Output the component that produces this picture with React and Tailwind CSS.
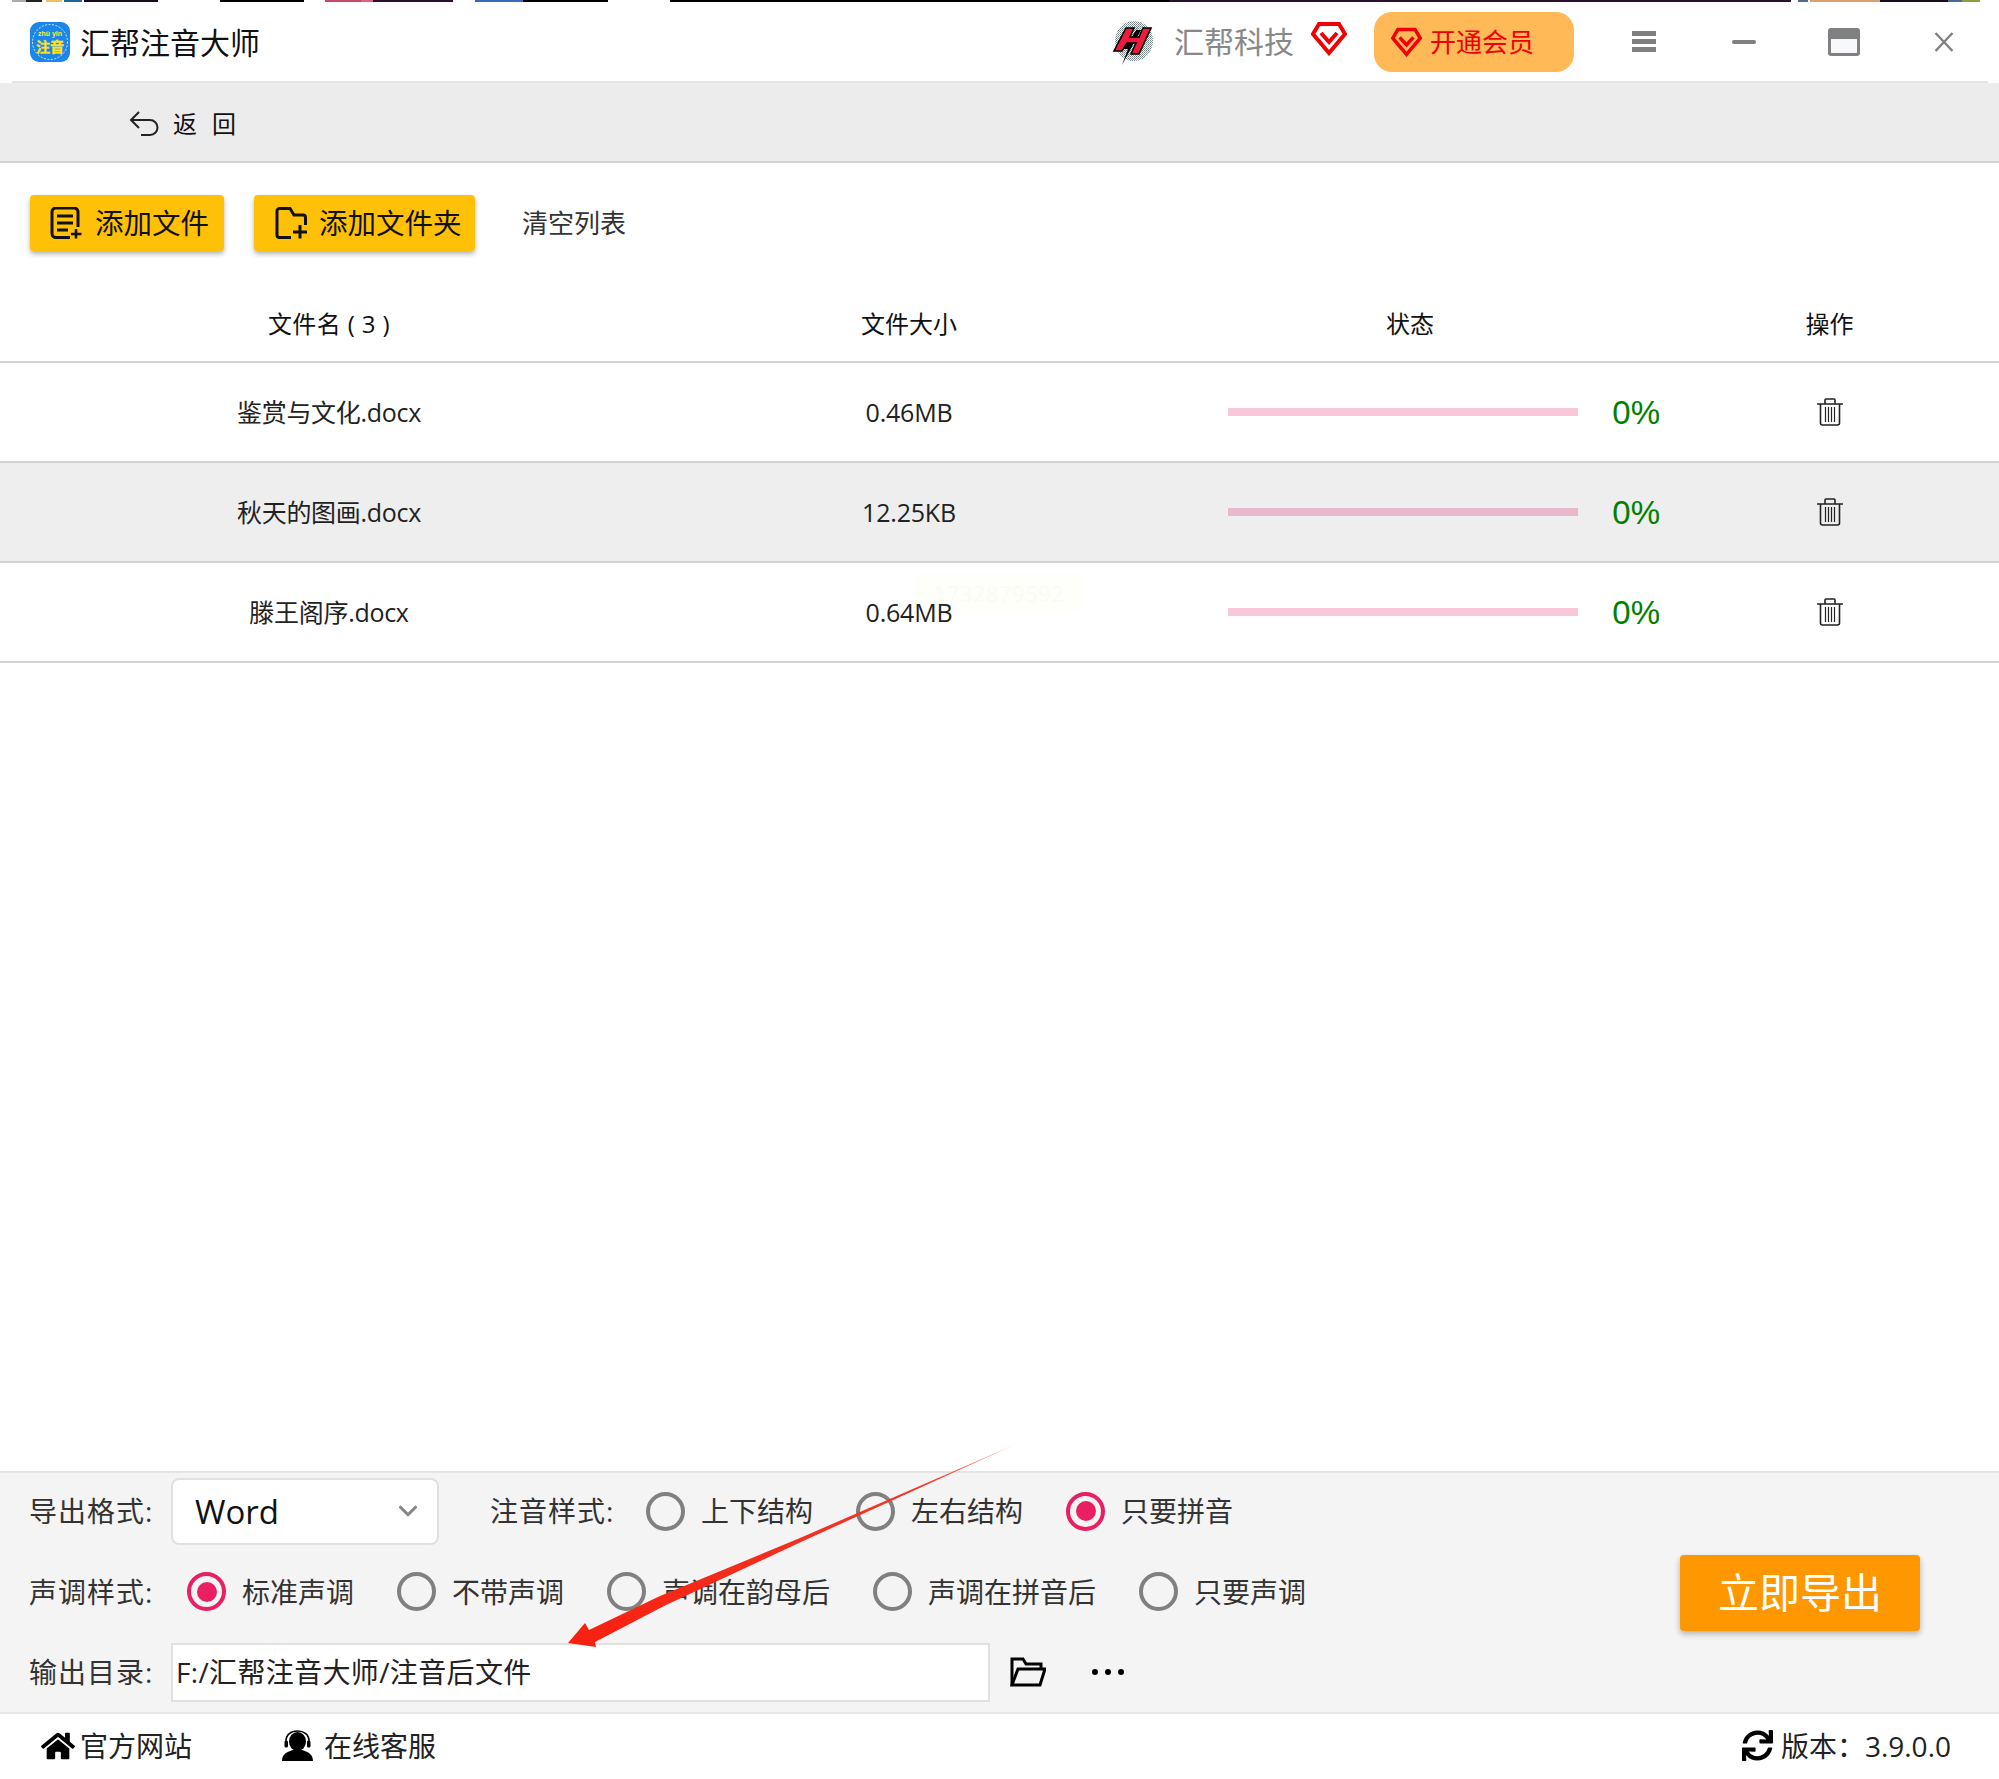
import { FaHome, FaSync } from 'react-icons/fa';
import { ChevronDown } from 'lucide-react';

const STRIP = [
  'w-[12px]', 'w-[14px] bg-[#aaaaaa]', 'w-[16px] bg-[#222222]', 'w-[4px]', 'w-[16px] bg-[#f0c060]', 'w-[2px]',
  'w-[18px] bg-[#1a6aa0]', 'w-[2px]', 'w-[74px] bg-[#1a0a20]', 'w-[62px]', 'w-[84px] bg-black', 'w-[21px]',
  'w-[36px] bg-[#c8486a]', 'w-[12px] bg-[#e06080]', 'w-[80px] bg-[#2a1030]', 'w-[22px]', 'w-[48px] bg-[#3a6ac0]',
  'w-[85px] bg-black', 'w-[62px]', 'w-[500px] bg-black', 'w-[621px] bg-[#2a1030]', 'w-[7px]', 'w-[10px] bg-[#4a6a90]',
  'w-[2px]', 'w-[70px] bg-[#d8a070]', 'w-[68px] bg-[#1a0a20]', 'w-[14px] bg-[#4a6a90]', 'w-[18px] bg-[#8aa040]',
];

const FILES = [
  { name: '鉴赏与文化.docx', size: '0.46MB' },
  { name: '秋天的图画.docx', size: '12.25KB', active: true },
  { name: '滕王阁序.docx', size: '0.64MB', mark: true },
];

const PINYIN_STYLES = [
  { label: '上下结构' },
  { label: '左右结构' },
  { label: '只要拼音', checked: true },
];

const TONE_STYLES = [
  { label: '标准声调', checked: true },
  { label: '不带声调' },
  { label: '声调在韵母后' },
  { label: '声调在拼音后' },
  { label: '只要声调' },
];

function AppLogo() {
  return (
    <svg width="40" height="40" viewBox="0 0 40 40" className="shrink-0">
      <rect width="40" height="40" rx="9" fill="#1c86e8" />
      <circle cx="20" cy="20" r="17.5" fill="none" stroke="#ffffff" strokeWidth="0.8" strokeDasharray="2 1.5" />
      <text x="20" y="14" textAnchor="middle" fontSize="7" fontWeight="700" fill="#ffe94d" fontFamily="Liberation Sans">zhù yīn</text>
      <text x="20" y="30" textAnchor="middle" fontSize="14" fontWeight="700" fill="#ffe21f" stroke="#ffe21f" strokeWidth="0.4" fontFamily="Noto Sans CJK SC">注音</text>
    </svg>
  );
}

function BrandLogo() {
  return (
    <svg width="42" height="47" viewBox="0 0 42 47" className="shrink-0">
      <defs>
        <pattern id="dots" width="2" height="2" patternUnits="userSpaceOnUse">
          <rect width="1" height="1" fill="#6f8080" />
          <rect x="1" y="1" width="1" height="1" fill="#8f9f9f" />
        </pattern>
      </defs>
      <ellipse cx="22" cy="23" rx="19" ry="20" fill="url(#dots)" />
      <path d="M32 0 L24 12 H29 L10 47 L16 31 H12 Z" fill="#000000" />
      <path
        d="M14 10 H22 L18 19 H27 L31 10 H39 L27 36 H19 L24 25 H15 L10 33 H2 Z"
        fill="#ee1c3c"
        stroke="#000000"
        strokeWidth="1.6"
      />
    </svg>
  );
}

function VipGem({ w, h, fill }) {
  return (
    <svg width={w} height={h} viewBox="0 0 36 35" className="shrink-0">
      <path d="M8 3 H28 L34 13 L18 32 L2 13 Z" fill={fill} stroke="#f00000" strokeWidth="4" strokeLinejoin="miter" />
      <path d="M10 12 L18 21 L26 12" fill="none" stroke="#f00000" strokeWidth="4" />
    </svg>
  );
}

function BackIcon() {
  return (
    <svg width="30" height="25" viewBox="0 0 30 25" fill="none" stroke="#222222" strokeWidth="2" className="shrink-0">
      <path d="M10 1 L2 9 L10 17" />
      <path d="M2 9 H21 a7 7 0 0 1 0 15 H12" />
    </svg>
  );
}

function FileAddIcon() {
  return (
    <svg width="32" height="32" viewBox="0 0 32 32" className="shrink-0" fill="none" stroke="#111111" strokeWidth="3">
      <path d="M20 30.5 H6 a4 4 0 0 1 -4 -4 V5 a4 4 0 0 1 4 -4 H24 a4 4 0 0 1 4 4 V20" />
      <path d="M7 9 H23 M7 16 H23 M7 23 H18" />
      <path d="M26 22 V31.5 M21 27 H31.5" strokeWidth="2.6" />
    </svg>
  );
}

function FolderAddIcon() {
  return (
    <svg width="32" height="32" viewBox="0 0 32 32" className="shrink-0" fill="none" stroke="#111111" strokeWidth="3">
      <path d="M16 30.5 H4 a2.5 2.5 0 0 1 -2 -2.5 V4 a2.5 2.5 0 0 1 2.5 -2.5 H15 L19 8 H28 a2.5 2.5 0 0 1 2.5 2.5 V18" />
      <path d="M25 18 V31.5 M18 25 H32" />
    </svg>
  );
}

function TrashIcon() {
  return (
    <svg width="28" height="28" viewBox="0 0 28 28" fill="none" stroke="#222222" strokeWidth="1.6">
      <path d="M1 6 H27 M9 6 V2 a1 1 0 0 1 1 -1 H18 a1 1 0 0 1 1 1 V6" />
      <path d="M4.5 6 V25 a2 2 0 0 0 2 2 H21.5 a2 2 0 0 0 2 -2 V6" />
      <path d="M9.5 9 V24 M12.5 9 V24 M15.5 9 V24 M18.5 9 V24" strokeWidth="1.2" />
    </svg>
  );
}

function AgentIcon() {
  return (
    <svg width="31" height="31" viewBox="0 0 31 31" className="shrink-0">
      <path d="M0 31 C0 23 7 21.5 11 20 H20 C24 21.5 31 23 31 31 Z" fill="#000000" />
      <ellipse cx="15.5" cy="11.5" rx="8.5" ry="9.5" fill="#000000" />
      <path d="M4 15 V11 C4 4.5 9 1 15.5 1 S27 4.5 27 11 V15" fill="none" stroke="#000000" strokeWidth="1.6" />
      <rect x="2.5" y="10.5" width="3.5" height="7" rx="1.5" fill="#000000" />
      <rect x="25" y="10.5" width="3.5" height="7" rx="1.5" fill="#000000" />
    </svg>
  );
}

function Radio({ label, checked }) {
  return (
    <div className="flex items-center gap-[16px]">
      <span
        className={
          checked
            ? 'w-[39px] h-[39px] rounded-full border-[4px] border-[#e91e63] flex items-center justify-center'
            : 'w-[39px] h-[39px] rounded-full border-[4px] border-[#808080]'
        }
      >
        {checked && <span className="w-[20px] h-[20px] rounded-full bg-[#e91e63]" />}
      </span>
      <span className="text-[28px] leading-none text-[#333333]">{label}</span>
    </div>
  );
}

function FileRow({ file }) {
  return (
    <div
      className={
        file.active
          ? 'relative grid grid-cols-[658px_502px_500px_339px] items-center h-[100px] border-b-2 border-[#d3d3d3] bg-[#eeeeee]'
          : 'relative grid grid-cols-[658px_502px_500px_339px] items-center h-[100px] border-b-2 border-[#d3d3d3]'
      }
    >
      {file.mark && (
        <div className="absolute left-[915px] top-[11px] w-[168px] h-[38px] bg-[#fefefa] text-[22px] leading-[38px] tracking-[0.5px] text-center text-[#fbfbf5]">
          1732879592
        </div>
      )}
      <div className="relative text-center text-[25px] leading-none tracking-[-0.3px] text-[#222222]">{file.name}</div>
      <div className="relative text-center text-[25px] leading-none tracking-[-0.2px] text-[#222222]">{file.size}</div>
      <div className="relative flex items-center pl-[68px]">
        <div className={file.active ? 'w-[351px] h-[8px] bg-[#e8b9cc]' : 'w-[351px] h-[8px] bg-[#f8c8da]'} />
        <span className="ml-[34px] font-['Liberation_Sans'] text-[33px] leading-none text-[#008000]">0%</span>
      </div>
      <div className="relative flex justify-center">
        <TrashIcon />
      </div>
    </div>
  );
}

export default function App() {
  return (
    <div className="relative w-[1999px] h-[1779px] overflow-hidden bg-white flex flex-col font-['Open_Sans','Noto_Sans_CJK_SC',sans-serif]">
      <div className="flex h-[2px] shrink-0">
        {STRIP.map((cls, i) => (
          <div key={i} className={cls} />
        ))}
      </div>

      {/* title bar */}
      <div className="flex items-center justify-between h-[79px] shrink-0 pl-[30px] pr-[45px]">
        <div className="flex items-center gap-[10px]">
          <AppLogo />
          <span className="mt-[2px] text-[30px] leading-none text-[#111111]">汇帮注音大师</span>
        </div>
        <div className="flex items-center">
          <BrandLogo />
          <span className="ml-[20px] text-[30px] leading-none text-[#888888]">汇帮科技</span>
          <span className="ml-[17px] -mt-[6px]">
            <VipGem w={36} h={35} fill="#ffffff" />
          </span>
          <div className="ml-[27px] w-[200px] h-[60px] rounded-[18px] bg-[#ffb957] flex items-center pl-[17px] gap-[8px]">
            <VipGem w={31} h={30} fill="none" />
            <span className="text-[26px] leading-none text-[#f00000]">开通会员</span>
          </div>
          <div className="ml-[58px] w-[24px] flex flex-col gap-[3px]">
            <div className="h-[5px] bg-[#808080]" />
            <div className="h-[5px] bg-[#808080]" />
            <div className="h-[5px] bg-[#808080]" />
          </div>
          <div className="ml-[76px] w-[24px] h-[4px] rounded-[2px] bg-[#808080]" />
          <div className="ml-[72px] w-[32px] h-[28px] rounded-[3px] border-[3px] border-[#808080] bg-[#f6f8fc]">
            <div className="h-[8px] bg-[#808080]" />
          </div>
          <svg width="20" height="20" viewBox="0 0 20 20" className="ml-[74px]" stroke="#808080" strokeWidth="2.4">
            <path d="M1.5 1 L18.5 19 M18.5 1 L1.5 19" />
          </svg>
        </div>
      </div>
      <div className="h-[2px] shrink-0 ml-[12px] mr-[11px] bg-[#e5e5e5]" />

      {/* back bar */}
      <div className="flex items-center h-[80px] shrink-0 pl-[129px] pt-[3px] bg-[#ececec] border-b-2 border-[#d3d3d3]">
        <BackIcon />
        <span className="ml-[14px] text-[24px] leading-none tracking-[15px] text-[#111111]">返回</span>
      </div>

      {/* toolbar */}
      <div className="flex items-center shrink-0 mt-[32px] pl-[30px]">
        <button className="flex items-center w-[194px] h-[56px] pl-[20px] gap-[13px] rounded-[4px] bg-[#ffc107] shadow-[0_3px_5px_rgba(0,0,0,0.3)]">
          <FileAddIcon />
          <span className="text-[28.5px] leading-none text-[#111111]">添加文件</span>
        </button>
        <button className="flex items-center w-[221px] h-[56px] ml-[30px] pl-[21px] gap-[12px] rounded-[4px] bg-[#ffc107] shadow-[0_3px_5px_rgba(0,0,0,0.3)]">
          <FolderAddIcon />
          <span className="text-[28.5px] leading-none text-[#111111]">添加文件夹</span>
        </button>
        <span className="ml-[47px] text-[26px] leading-none text-[#333333]">清空列表</span>
      </div>

      {/* file table */}
      <div className="grid grid-cols-[658px_502px_500px_339px] items-center h-[77px] shrink-0 mt-[35px] border-b-2 border-[#d3d3d3] text-center text-[24px] leading-none text-[#111111]">
        <div className="tracking-[0.4px]">文件名 ( 3 )</div>
        <div>文件大小</div>
        <div>状态</div>
        <div>操作</div>
      </div>
      {FILES.map(file => (
        <FileRow key={file.name} file={file} />
      ))}

      <div className="flex-1" />

      {/* export options */}
      <div className="flex shrink-0 bg-[#f4f4f4] border-t-2 border-b-2 border-[#e5e5e5]">
        <div className="flex flex-col pb-[2px]">
          <div className="flex items-center h-[76px] pl-[29px]">
            <span className="w-[142px] text-[28px] leading-none tracking-[1px] text-[#333333]">导出格式:</span>
            <div className="flex items-center justify-between w-[268px] h-[67px] pl-[22px] pr-[14px] rounded-[8px] border-2 border-[#e0e0e0] bg-white">
              <span className="text-[33px] leading-none text-[#111111]">Word</span>
              <ChevronDown size={30} strokeWidth={2.5} color="#888888" />
            </div>
            <span className="ml-[51px] w-[156px] text-[28px] leading-none tracking-[1px] text-[#333333]">注音样式:</span>
            <div className="flex gap-[43px]">
              {PINYIN_STYLES.map(s => (
                <Radio key={s.label} label={s.label} checked={s.checked} />
              ))}
            </div>
          </div>
          <div className="flex items-center h-[85px] pl-[29px]">
            <span className="w-[158px] text-[28px] leading-none tracking-[1px] text-[#333333]">声调样式:</span>
            <div className="flex gap-[43px]">
              {TONE_STYLES.map(s => (
                <Radio key={s.label} label={s.label} checked={s.checked} />
              ))}
            </div>
          </div>
          <div className="flex items-center h-[76px] pl-[29px]">
            <span className="w-[142px] text-[28px] leading-none tracking-[1px] text-[#333333]">输出目录:</span>
            <div className="flex items-center w-[819px] h-[59px] pl-[3px] border-2 border-[#e0e0e0] bg-white text-[28px] leading-none tracking-[0.35px] text-[#222222]">
              F:/汇帮注音大师/注音后文件
            </div>
            <svg width="36" height="30" viewBox="0 0 36 30" className="ml-[20px]" fill="none" stroke="#000000" strokeWidth="3">
              <path d="M2 28 V2 H13 L16 7 H31 V12" />
              <path d="M2 28 L8 12 H35 L30 28 Z" />
            </svg>
            <div className="flex ml-[46px] gap-[7px]">
              <span className="w-[6px] h-[6px] rounded-full bg-black" />
              <span className="w-[6px] h-[6px] rounded-full bg-black" />
              <span className="w-[6px] h-[6px] rounded-full bg-black" />
            </div>
          </div>
        </div>
        <div className="ml-auto mr-[79px] flex items-center">
          <button className="w-[240px] h-[76px] rounded-[4px] bg-[#ff9800] text-[41px] leading-none text-white shadow-[0_3px_6px_rgba(0,0,0,0.28)]">
            立即导出
          </button>
        </div>
      </div>

      {/* footer */}
      <div className="flex items-center h-[65px] shrink-0 pl-[41px] pr-[48px] pb-[2px] text-[28px] leading-none text-[#222222]">
        <FaHome size={34} color="#000000" />
        <span className="ml-[5px]">官方网站</span>
        <span className="ml-[90px]">
          <AgentIcon />
        </span>
        <span className="ml-[11px]">在线客服</span>
        <FaSync size={31} color="#000000" className="ml-auto" />
        <span className="ml-[8px]">版本：3.9.0.0</span>
      </div>

      {/* annotation arrow drawn over the screenshot */}
      <svg width="1999" height="1779" viewBox="0 0 1999 1779" className="absolute left-0 top-0 pointer-events-none">
        <defs>
          <linearGradient id="arrowFade" gradientUnits="userSpaceOnUse" x1="1014" y1="1445" x2="568" y2="1643">
            <stop offset="0" stopColor="#f5a090" />
            <stop offset="0.2" stopColor="#ee3a2a" />
            <stop offset="1" stopColor="#f8200f" />
          </linearGradient>
        </defs>
        <polygon
          points="568,1643 585,1623 589,1630 660,1596 800,1538 1014,1445 801,1542 664,1606 595,1642 596,1647"
          fill="url(#arrowFade)"
        />
      </svg>
    </div>
  );
}
